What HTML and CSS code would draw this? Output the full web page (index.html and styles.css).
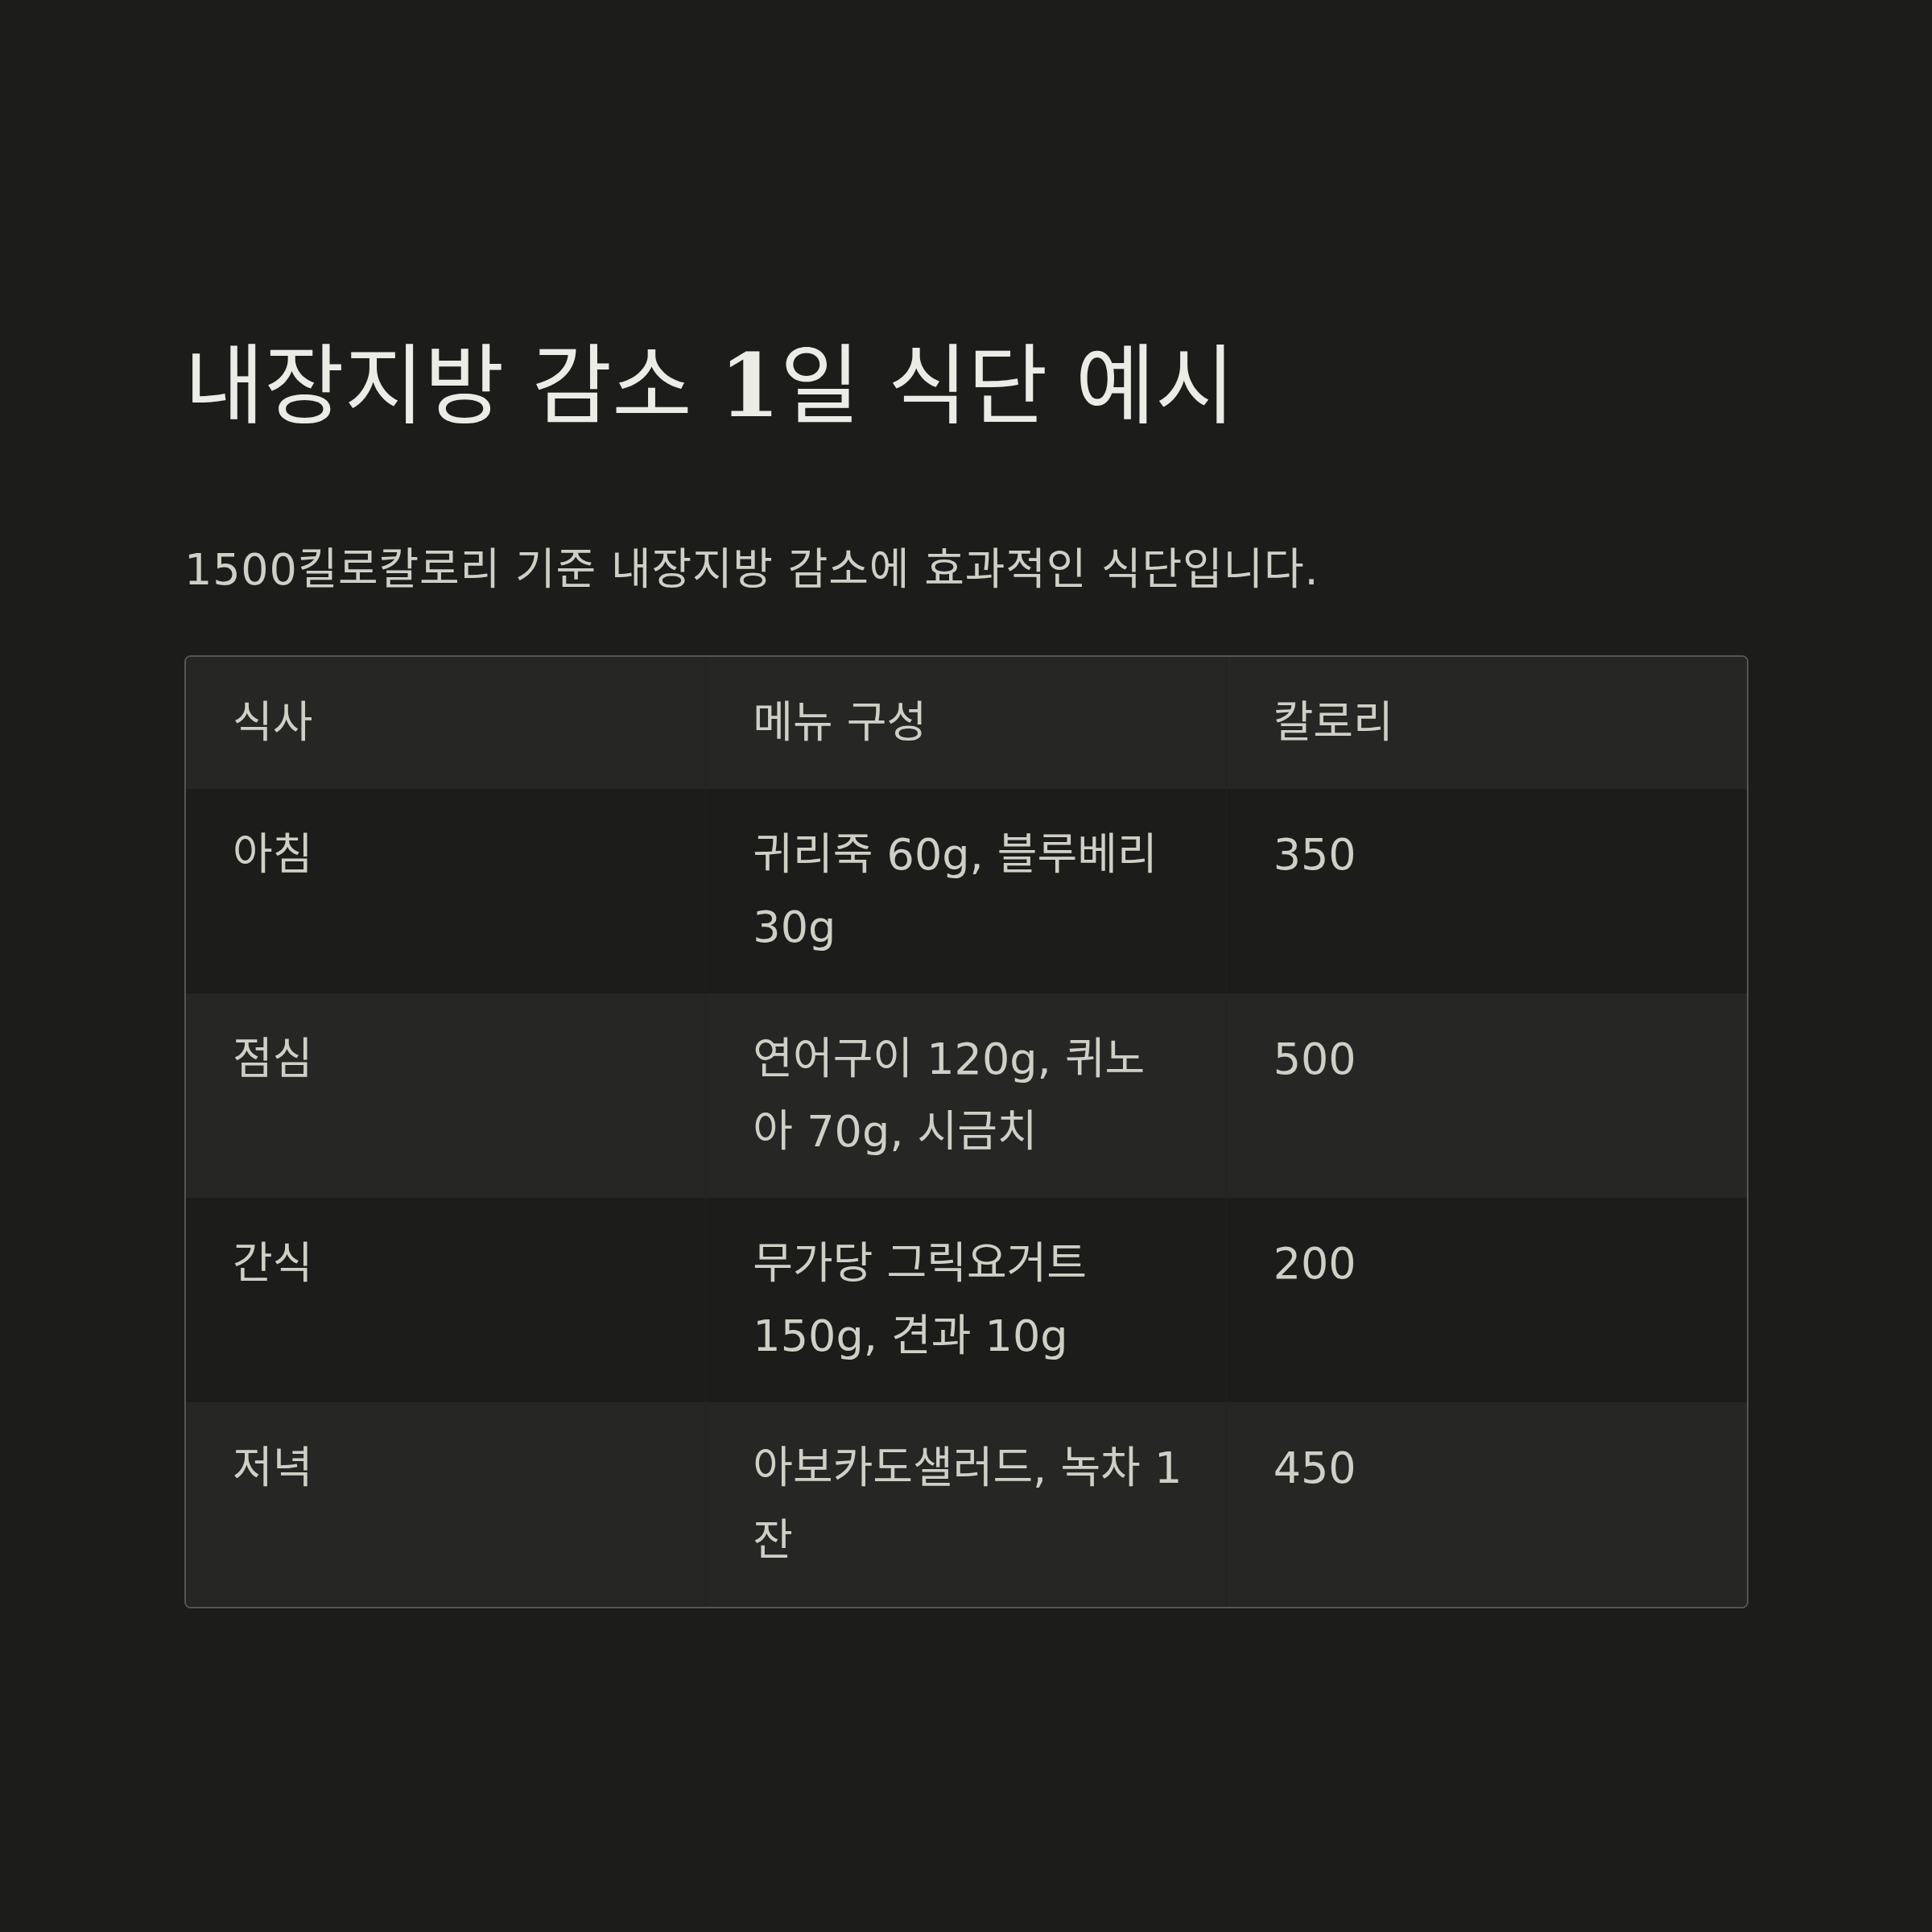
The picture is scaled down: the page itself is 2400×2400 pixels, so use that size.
FILE: index.html
```html
<!DOCTYPE html>
<html lang="ko">
<head>
<meta charset="utf-8">
<title>내장지방 감소 1일 식단 예시</title>
<link rel="stylesheet" href="styles.css">
</head>
<body>
<main class="page">
  <h1 class="title">내장지방 감소 <span class="title-num">1</span>일 식단 예시</h1>
  <p class="subtitle">1500킬로칼로리 기준 내장지방 감소에 효과적인 식단입니다.</p>
  <div class="table-wrap">
    <table class="diet">
      <thead>
        <tr><th>식사</th><th class="menu">메뉴 구성</th><th>칼로리</th></tr>
      </thead>
      <tbody>
        <tr><td>아침</td><td class="menu">귀리죽 60g, 블루베리 30g</td><td>350</td></tr>
        <tr><td>점심</td><td class="menu">연어구이 120g, 퀴노아 70g, 시금치</td><td>500</td></tr>
        <tr><td>간식</td><td class="menu">무가당 그릭요거트 150g, 견과 10g</td><td>200</td></tr>
        <tr><td>저녁</td><td class="menu">아보카도샐러드, 녹차 1잔</td><td>450</td></tr>
      </tbody>
    </table>
  </div>
</main>
</body>
</html>
```
FILE: styles.css
```css
html, body {
  margin: 0;
  padding: 0;
  background: #1c1c1b;
}

body {
  font-family: "DejaVu Sans", "Noto Sans CJK KR", sans-serif;
  color: #cfcfc5;
}

.page {
  padding: 414px 228px 0 229px;
  width: 1943px;
}

.title {
  margin: 0;
  font-size: 108px;
  line-height: 130px;
  font-weight: 400;
  color: #ecece6;
}

.title-num {
  font-family: "DejaVu Serif", serif;
  font-weight: 700;
}

.subtitle {
  margin: 123px 0 0;
  font-size: 54px;
  line-height: 80px;
  letter-spacing: 0.8px;
  color: #cfcfc5;
}

.table-wrap {
  margin-top: 66px;
  border: 2px solid #555553;
  border-radius: 8px;
  overflow: hidden;
}

.diet {
  width: 100%;
  border-collapse: separate;
  border-spacing: 0;
  table-layout: fixed;
}

.diet th,
.diet td {
  padding: 37px 58px;
  font-size: 54px;
  line-height: 90px;
  font-weight: 400;
  text-align: left;
  vertical-align: top;
  color: #cfcfc5;
  border-right: 1px solid #212120;
}

.diet .menu {
  padding-right: 52px;
}

.diet th:last-child,
.diet td:last-child {
  border-right: none;
}

.diet thead tr,
.diet tbody tr:nth-child(even) {
  background: #262625;
}

.diet tbody tr:nth-child(odd) {
  background: #1c1c1b;
}
```
